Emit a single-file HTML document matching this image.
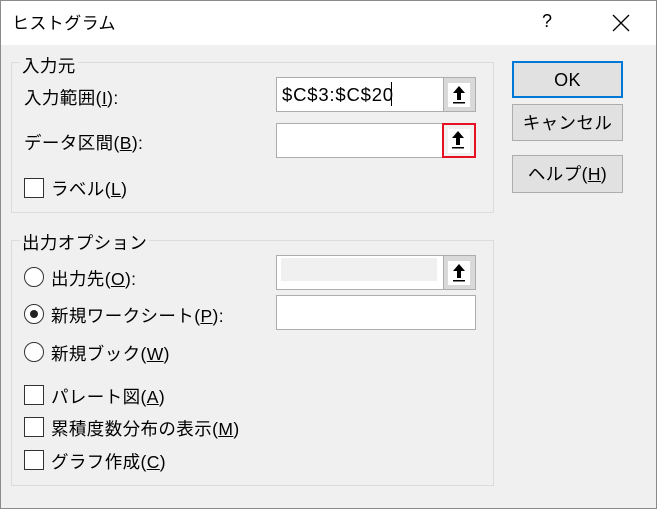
<!DOCTYPE html>
<html><head><meta charset="utf-8"><style>
*{margin:0;padding:0;box-sizing:border-box}
body{width:657px;height:509px;position:relative;background:#f0f0f0;font-family:"Liberation Sans","Noto Sans CJK JP",sans-serif;font-size:17.5px;letter-spacing:0.4px;color:#000;overflow:hidden}
.a{position:absolute;white-space:nowrap;line-height:20px}
.win{position:absolute;left:0;top:0;width:657px;height:509px;border:1px solid #8a8a8a}
.title{position:absolute;left:1px;top:1px;width:655px;height:44px;background:#fff}
.grp{position:absolute;border:1px solid #dcdcdc}
.lg{position:absolute;background:#f0f0f0;padding:0 2px}
.inp{position:absolute;background:#fff;border:1px solid #adadad}
.ub{position:absolute;background:#d9d9d9;border:1px solid #adadad}
.ub i{position:absolute;left:4px;top:5px;width:22px;height:24px;background:#fff}
.btn{position:absolute;left:512px;width:111px;background:#e1e1e1;border:1px solid #adadad;text-align:center}
.cb{position:absolute;left:24px;width:20px;height:20px;border:1px solid #333;background:#fff}
.rd{position:absolute;left:24px;width:20px;height:20px;border:1px solid #333;border-radius:50%;background:#fff}
u{text-decoration:underline}
</style></head><body>
<div class="win"></div>
<div class="title"></div>
<div class="a" style="left:12px;top:14px;font-size:17px">ヒストグラム</div>
<div class="a" style="left:542px;top:11px;font-size:18px">?</div>
<svg class="a" style="left:612px;top:14px" width="18" height="18"><path d="M1 1L17 17M17 1L1 17" stroke="#000" stroke-width="1.3"/></svg>

<div class="grp" style="left:11px;top:62px;width:483px;height:151px"></div>
<div class="lg a" style="left:20px;top:56px">入力元</div>
<div class="a" style="left:24px;top:88px">入力範囲(<u>I</u>):</div>
<div class="a" style="left:24px;top:133px">データ区間(<u>B</u>):</div>
<div class="cb" style="top:178px"></div>
<div class="a" style="left:51px;top:179px">ラベル(<u>L</u>)</div>

<div class="inp" style="left:276px;top:77px;width:200px;height:35px"></div>
<div class="a" style="left:282px;top:85px;font-size:18.5px;letter-spacing:0.8px">$C$3:$C$20</div>
<div class="a" style="left:391px;top:82px;width:1px;height:24px;background:#000"></div>
<div class="ub" style="left:443px;top:77px;width:33px;height:35px"><i></i></div>
<div class="inp" style="left:276px;top:123px;width:200px;height:35px"></div>
<div class="ub" style="left:442px;top:123px;width:34px;height:35px;border:2px solid #e81123;background:#f0f0f0"><i style="left:4px;top:4px"></i></div>

<div class="grp" style="left:11px;top:240px;width:483px;height:246px"></div>
<div class="lg a" style="left:20px;top:233px">出力オプション</div>
<div class="rd" style="top:267px"></div>
<div class="a" style="left:51px;top:269px">出力先(<u>O</u>):</div>
<div class="rd" style="top:304px"></div>
<div class="a" style="left:30px;top:310px;width:8px;height:8px;border-radius:50%;background:#222"></div>
<div class="a" style="left:51px;top:306px">新規ワークシート(<u>P</u>):</div>
<div class="rd" style="top:342px"></div>
<div class="a" style="left:51px;top:344px">新規ブック(<u>W</u>)</div>
<div class="cb" style="top:385px"></div>
<div class="a" style="left:51px;top:387px">パレート図(<u>A</u>)</div>
<div class="cb" style="top:417px"></div>
<div class="a" style="left:51px;top:419px">累積度数分布の表示(<u>M</u>)</div>
<div class="cb" style="top:450px"></div>
<div class="a" style="left:51px;top:452px">グラフ作成(<u>C</u>)</div>

<div class="inp" style="left:276px;top:255px;width:200px;height:35px"></div>
<div class="a" style="left:281px;top:258px;width:156px;height:23px;background:#f0f0f0"></div>
<div class="ub" style="left:443px;top:255px;width:33px;height:35px"><i></i></div>
<div class="inp" style="left:276px;top:295px;width:200px;height:35px"></div>

<div class="btn" style="top:61px;height:37px;border:2px solid #0078d7;line-height:34px;font-size:18px">OK</div>
<div class="btn" style="top:104px;height:37px;line-height:36px">キャンセル</div>
<div class="btn" style="top:155px;height:38px;line-height:37px">ヘルプ(<u>H</u>)</div>

<svg class="a" style="left:450px;top:84px" width="18" height="22"><path d="M9 2L3 9H7V16H11V9H15Z" fill="#000"/><rect x="3" y="18" width="12" height="1.5" fill="#000"/></svg>
<svg class="a" style="left:449px;top:129px" width="18" height="22"><path d="M9 2L3 9H7V16H11V9H15Z" fill="#000"/><rect x="3" y="18" width="12" height="1.5" fill="#000"/></svg>
<svg class="a" style="left:450px;top:262px" width="18" height="22"><path d="M9 2L3 9H7V16H11V9H15Z" fill="#000"/><rect x="3" y="18" width="12" height="1.5" fill="#000"/></svg>
</body></html>
